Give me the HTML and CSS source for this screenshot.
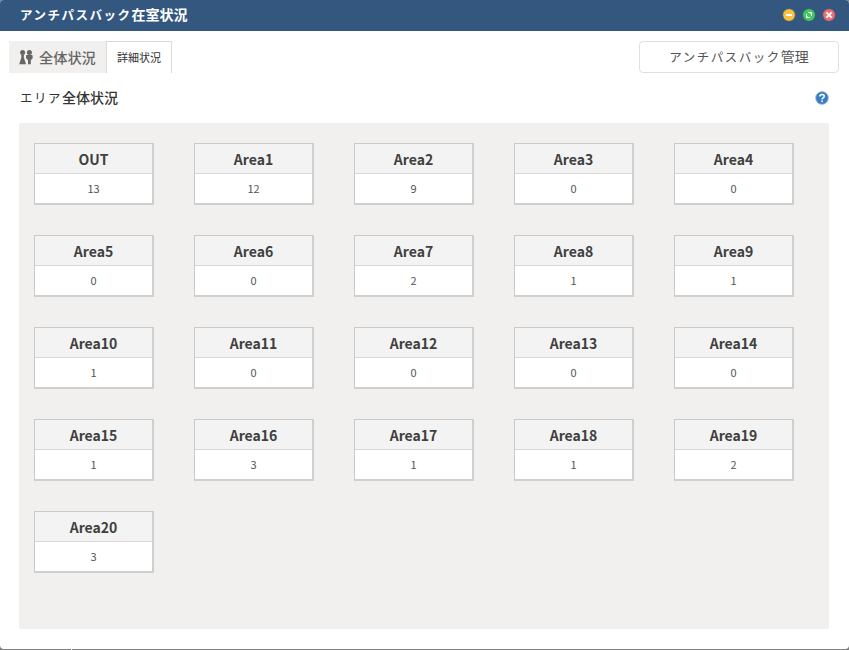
FILE: index.html
```
<!DOCTYPE html>
<html lang="ja">
<head>
<meta charset="utf-8">
<title>アンチパスバック在室状況</title>
<link rel="stylesheet" href="styles.css">
</head>
<body>
<div class="window">
  <header class="titlebar">
    <h1><span class="kana">アンチパスバック</span>在室状況</h1>
    <div class="controls">
      <svg width="14" height="14" viewBox="0 0 14 14"><circle cx="7" cy="7" r="6.2" fill="#fbc13c" stroke="#466080" stroke-width=".6"/><path d="M4 7h6" stroke="#fff" stroke-width="2"/></svg>
      <svg width="14" height="14" viewBox="0 0 14 14"><circle cx="7" cy="7" r="6.2" fill="#3fce5b" stroke="#466080" stroke-width=".6"/><path d="M6 4.5h3.5V8M8 9.5H4.5V6M9.5 4.5L8.3 5.7M4.5 9.5l1.2-1.2" fill="none" stroke="#fff" stroke-width="1"/></svg>
      <svg width="14" height="14" viewBox="0 0 14 14"><circle cx="7" cy="7" r="6.2" fill="#f36a70" stroke="#466080" stroke-width=".6"/><path d="M4.4 4.4l5.2 5.2M9.6 4.4L4.4 9.6" stroke="#fff" stroke-width="2"/></svg>
    </div>
  </header>
  <div class="toolbar">
    <nav class="tabs">
      <div class="tab active">
        <svg width="14" height="15" viewBox="0 0 14 15" fill="#666"><circle cx="3.6" cy="2.5" r="2.5"/><path d="M2.2 4.7h2.8l-.2 2.6L7 14.2H.2l2.2-6.9z"/><circle cx="10.4" cy="2.5" r="2.5"/><path d="M7.2 5h6.2l.4 3-2 2.3v3.9H9v-3.9L7 8z"/></svg>
        <span>全体状況</span>
      </div>
      <div class="tab detail">詳細状況</div>
    </nav>
    <button class="manage"><span class="kana">アンチパスバック</span>管理</button>
  </div>
  <div class="section">
    <h2><span class="kana">エリア</span>全体状況</h2>
    <svg width="14" height="14" viewBox="0 0 14 14"><circle cx="7" cy="7" r="6.4" fill="#357fc4" stroke="#b7bec6" stroke-width=".8"/><path d="M4.9 5.5C4.9 2.8 9.2 2.9 9.2 5.3 9.2 6.9 7.1 6.8 7.1 8.4M7.1 9.4v1.6" fill="none" stroke="#fff" stroke-width="1.6"/></svg>
  </div>
  <main class="areas">
    <div class="card"><h3>OUT</h3><p>13</p></div>
    <div class="card"><h3>Area1</h3><p>12</p></div>
    <div class="card"><h3>Area2</h3><p>9</p></div>
    <div class="card"><h3>Area3</h3><p>0</p></div>
    <div class="card"><h3>Area4</h3><p>0</p></div>
    <div class="card"><h3>Area5</h3><p>0</p></div>
    <div class="card"><h3>Area6</h3><p>0</p></div>
    <div class="card"><h3>Area7</h3><p>2</p></div>
    <div class="card"><h3>Area8</h3><p>1</p></div>
    <div class="card"><h3>Area9</h3><p>1</p></div>
    <div class="card"><h3>Area10</h3><p>1</p></div>
    <div class="card"><h3>Area11</h3><p>0</p></div>
    <div class="card"><h3>Area12</h3><p>0</p></div>
    <div class="card"><h3>Area13</h3><p>0</p></div>
    <div class="card"><h3>Area14</h3><p>0</p></div>
    <div class="card"><h3>Area15</h3><p>1</p></div>
    <div class="card"><h3>Area16</h3><p>3</p></div>
    <div class="card"><h3>Area17</h3><p>1</p></div>
    <div class="card"><h3>Area18</h3><p>1</p></div>
    <div class="card"><h3>Area19</h3><p>2</p></div>
    <div class="card"><h3>Area20</h3><p>3</p></div>
  </main>
</div>
</body>
</html>
```
FILE: styles.css
```
* { box-sizing: border-box; margin: 0; padding: 0; }
body {
  height: 650px;
  overflow: hidden;
  background: linear-gradient(90deg, #808080 71px, #fff 71px, #fff 72px, #808080 72px);
  font-family: "Noto Sans CJK JP", sans-serif;
  color: #333;
}
svg { display: block; }
.window {
  height: 649px;
  background: #fff;
  border-radius: 4px;
  overflow: hidden;
}
.titlebar {
  height: 31px;
  display: flex;
  align-items: center;
  justify-content: space-between;
  padding: 0 13px 2px 20px;
  background: #33577f;
}
h1 { font-size: 14px; line-height: 20px; font-weight: 700; color: #fff; }
.kana { font-size: 12.5px; letter-spacing: 1.5px; font-weight: 700; }
.controls { display: flex; gap: 6px; padding-top: 1px; }
.toolbar {
  display: flex;
  justify-content: space-between;
  padding: 10px 10px 0 9px;
}
.tabs { display: flex; height: 32px; }
.tab { display: flex; align-items: center; }
.active {
  width: 97px;
  gap: 6px;
  padding-left: 10px;
  background: #f1f0ee;
  color: #666;
  font-size: 14.2px;
  font-weight: 500;
}
.active span { line-height: 20px; }
.detail {
  width: 66px;
  justify-content: center;
  padding-bottom: 2px;
  border: 1px solid #dadada;
  border-bottom: 0;
  font-size: 11px;
}
.manage {
  width: 200px;
  height: 32px;
  padding-bottom: 1px;
  background: #fff;
  border: 1px solid #dfdfdf;
  border-radius: 4px;
  font: 400 14px/20px "Noto Sans CJK JP", sans-serif;
  color: #555;
}
.manage .kana { font-weight: 400; }
.section {
  display: flex;
  align-items: center;
  justify-content: space-between;
  height: 50px;
  padding: 0 20px;
}
h2 { font-size: 14px; line-height: 20px; font-weight: 500; padding-bottom: 1px; }
h2 .kana { font-weight: 400; }
.areas {
  height: 506px;
  margin: 0 20px 0 19px;
  padding: 20px 15px;
  display: grid;
  grid-template-columns: repeat(5, 120px);
  grid-auto-rows: 62px;
  gap: 30px 40px;
  align-content: start;
  background: #f1f0ee;
}
.card {
  border: 1px solid #cacaca;
  border-right: 2px solid #cfcfcf;
  border-bottom: 2px solid #cfcfcf;
  background: #fff;
  text-align: center;
}
.card h3 {
  height: 30px;
  border-bottom: 1px solid #d8d8d8;
  background: #f3f3f3;
  font-size: 14px;
  line-height: 30px;
  font-weight: 700;
  color: #404040;
}
.card p { font-size: 11px; line-height: 29px; color: #555; }
```
